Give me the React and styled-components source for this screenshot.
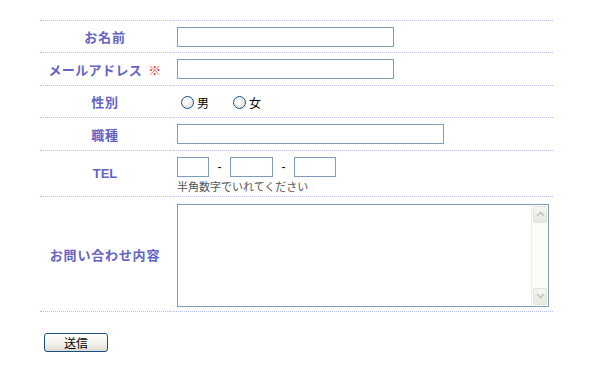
import React from "react";
import styled, { createGlobalStyle } from "styled-components";

const GlobalStyle = createGlobalStyle`
  html, body {
    margin: 0;
    padding: 0;
    background: #fff;
    font-family: "Noto Sans CJK JP", "Noto Sans", sans-serif;
  }
`;

const App = () => {
  return (
    <>
      <GlobalStyle />
      <Page>
        <FormTable>
          <tbody>
            <Row $h={32} $first>
              <Label>お名前</Label>
              <Field>
                <TextInput $w={217} />
              </Field>
            </Row>
            <Row $h={33}>
              <Label $tight>
                メールアドレス<Mark>※</Mark>
              </Label>
              <Field>
                <TextInput $w={217} />
              </Field>
            </Row>
            <Row $h={32}>
              <Label>性別</Label>
              <Field>
                <RadioGroup>
                  <RadioItem>
                    <Radio />男
                  </RadioItem>
                  <RadioItem>
                    <Radio />女
                  </RadioItem>
                </RadioGroup>
              </Field>
            </Row>
            <Row $h={33}>
              <Label>職種</Label>
              <Field>
                <TextInput $w={267} />
              </Field>
            </Row>
            <Row $h={46}>
              <Label $latin>TEL</Label>
              <Field $top>
                <TelLine>
                  <TextInput $w={32} />
                  <Dash>-</Dash>
                  <TextInput $w={43} />
                  <Dash>-</Dash>
                  <TextInput $w={42} />
                </TelLine>
                <Hint>半角数字でいれてください</Hint>
              </Field>
            </Row>
            <Row $h={115}>
              <Label>お問い合わせ内容</Label>
              <Field>
                <AreaBox>
                  <Area />
                  <Scroll>
                    <ScrollBtn>
                      <svg width="9" height="6" viewBox="0 0 9 6">
                        <path d="M1 5 L4.5 1.5 L8 5" fill="none" stroke="#c4c4bc" strokeWidth="1.6" />
                      </svg>
                    </ScrollBtn>
                    <ScrollBtn>
                      <svg width="9" height="6" viewBox="0 0 9 6">
                        <path d="M1 1 L4.5 4.5 L8 1" fill="none" stroke="#c4c4bc" strokeWidth="1.6" />
                      </svg>
                    </ScrollBtn>
                  </Scroll>
                </AreaBox>
              </Field>
            </Row>
          </tbody>
        </FormTable>
        <Submit>送信</Submit>
      </Page>
    </>
  );
};

export default App;

const Page = styled.div`
  width: 593px;
  height: 374px;
  padding: 20px 0 0 40px;
  box-sizing: border-box;
`;

const FormTable = styled.table`
  width: 513px;
  border-collapse: collapse;
`;

const Row = styled.tr`
  height: ${(p) => p.$h}px;
  border-bottom: 1px dotted #b8b8f4;
  border-top: ${(p) => (p.$first ? "1px dotted #b8b8f4" : "none")};
`;

const Label = styled.td`
  width: 130px;
  padding: 0;
  text-align: center;
  vertical-align: middle;
  color: #6464c8;
  font-size: 13px;
  font-weight: 700;
  letter-spacing: ${(p) => (p.$latin ? "0" : p.$tight ? "0.4px" : "0.8px")};
  font-family: ${(p) =>
    p.$latin ? '"Liberation Sans", Arial, sans-serif' : '"Noto Sans CJK JP", sans-serif'};
`;

const Mark = styled.span`
  color: #f23a3a;
  margin-left: 6px;
`;

const Field = styled.td`
  padding: ${(p) => (p.$top ? "6px 0 0 7px" : "0 0 0 7px")};
  vertical-align: ${(p) => (p.$top ? "top" : "middle")};
`;

const TextInput = styled.input.attrs({ type: "text" })`
  display: block;
  width: ${(p) => p.$w}px;
  height: 20px;
  box-sizing: border-box;
  border: 1px solid #7f9db9;
  padding: 0 2px;
  margin: 0;
  background: #fff;
  outline: none;
`;

const RadioGroup = styled.div`
  display: flex;
  gap: 24px;
  padding-left: 4px;
  padding-top: 2px;
`;

const RadioItem = styled.label`
  display: flex;
  align-items: center;
  gap: 3px;
  font-size: 12px;
  color: #000;
`;

const Radio = styled.span`
  display: inline-block;
  width: 11px;
  height: 11px;
  border-radius: 50%;
  border: 1px solid #1d5281;
  background: radial-gradient(circle at 35% 35%, #fff 0%, #f2f2f2 45%, #d0d0cc 100%);
`;

const TelLine = styled.div`
  display: flex;
  align-items: center;
`;

const Dash = styled.span`
  width: 21px;
  text-align: center;
  font-size: 12px;
  font-family: "Liberation Sans", Arial, sans-serif;
  color: #000;
`;

const Hint = styled.div`
  margin-top: 3px;
  font-size: 11px;
  line-height: 13px;
  color: #555;
`;

const AreaBox = styled.div`
  display: flex;
  width: 372px;
  height: 103px;
  box-sizing: border-box;
  border: 1px solid #7f9db9;
  margin-top: 2px;
`;

const Area = styled.textarea`
  flex: 1;
  border: none;
  resize: none;
  outline: none;
  margin: 0;
  padding: 2px;
`;

const Scroll = styled.div`
  width: 16px;
  background: #fcfcf9;
  border-left: 1px solid #eeeee8;
  display: flex;
  flex-direction: column;
  justify-content: space-between;
`;

const ScrollBtn = styled.div`
  height: 15px;
  margin: 1px;
  border-radius: 2px;
  background: linear-gradient(#f6f6f2, #e8e8e2);
  border: 1px solid #e2e2dc;
  display: flex;
  align-items: center;
  justify-content: center;
`;

const Submit = styled.button`
  display: block;
  margin: 21px 0 0 4px;
  width: 64px;
  height: 19px;
  padding: 0;
  border: 1px solid #1c4d86;
  border-radius: 3px;
  background: linear-gradient(#ffffff, #f2f1ea 60%, #dcdad0);
  font-size: 12px;
  line-height: 16px;
  color: #000;
  font-family: "Noto Sans CJK JP", sans-serif;
`;
